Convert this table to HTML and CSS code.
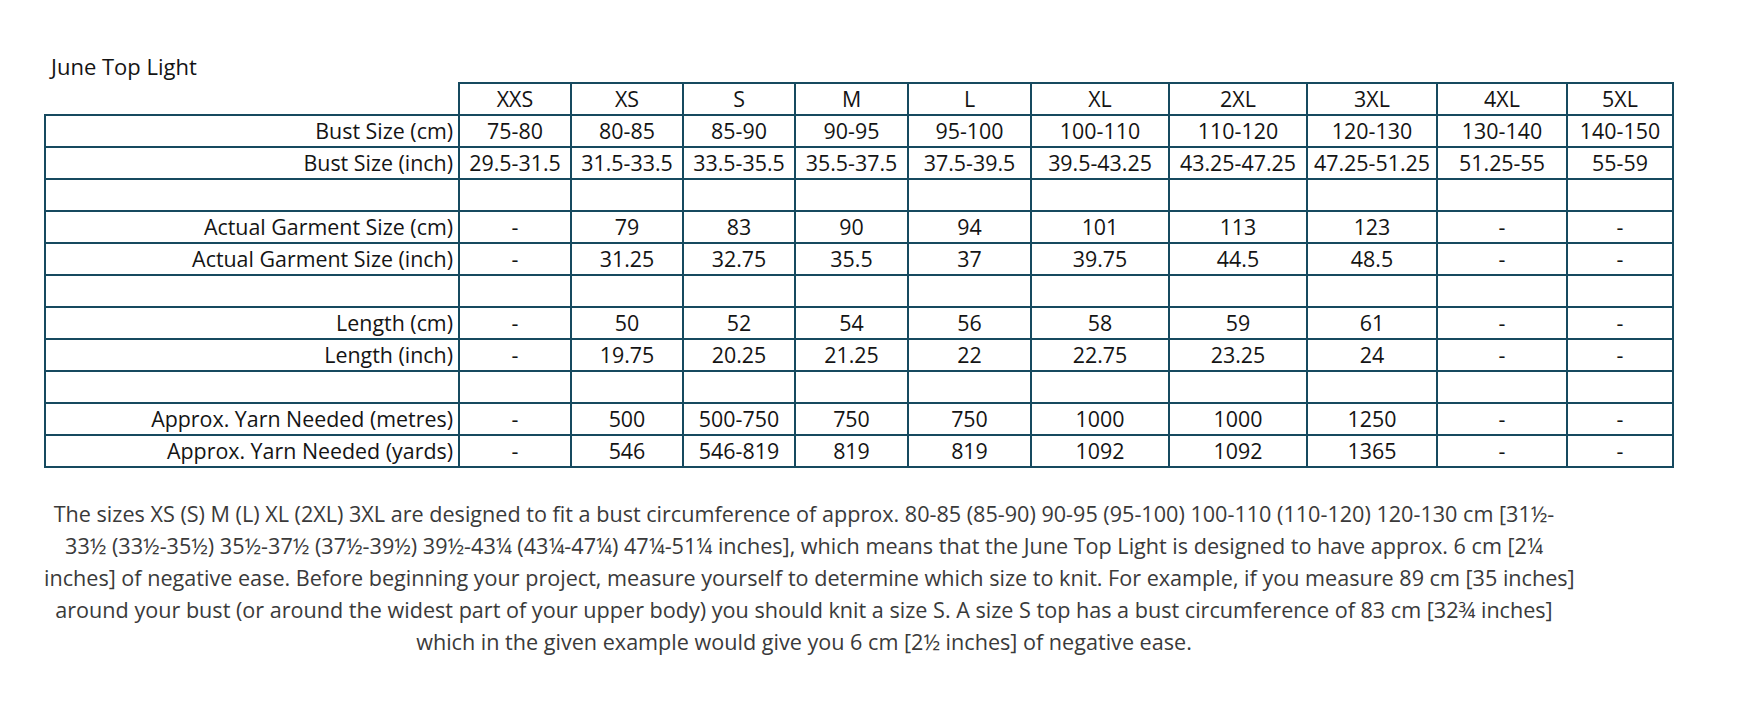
FILE: index.html
```html
<!DOCTYPE html>
<html lang="en">
<head>
<meta charset="utf-8">
<title>June Top Light – Size Chart</title>
<link rel="stylesheet" href="styles.css">
</head>
<body>
<main class="page">
  <h1 class="title">June Top Light</h1>
  <table class="chart">
    <colgroup>
      <col class="c-label"><col class="c-112"><col class="c-112"><col class="c-112"><col class="c-113"><col class="c-123"><col class="c-138"><col class="c-138"><col class="c-130"><col class="c-130"><col class="c-106">
    </colgroup>
    <thead>
      <tr>
        <th class="blank"></th>
        <th>XXS</th><th>XS</th><th>S</th><th>M</th><th>L</th><th>XL</th><th>2XL</th><th>3XL</th><th>4XL</th><th>5XL</th>
      </tr>
    </thead>
    <tbody>
      <tr><th class="label">Bust Size (cm)</th><td>75-80</td><td>80-85</td><td>85-90</td><td>90-95</td><td>95-100</td><td>100-110</td><td>110-120</td><td>120-130</td><td>130-140</td><td>140-150</td></tr>
      <tr><th class="label">Bust Size (inch)</th><td>29.5-31.5</td><td>31.5-33.5</td><td>33.5-35.5</td><td>35.5-37.5</td><td>37.5-39.5</td><td>39.5-43.25</td><td>43.25-47.25</td><td>47.25-51.25</td><td>51.25-55</td><td>55-59</td></tr>
      <tr class="spacer"><th class="label"></th><td></td><td></td><td></td><td></td><td></td><td></td><td></td><td></td><td></td><td></td></tr>
      <tr><th class="label">Actual Garment Size (cm)</th><td>-</td><td>79</td><td>83</td><td>90</td><td>94</td><td>101</td><td>113</td><td>123</td><td>-</td><td>-</td></tr>
      <tr><th class="label">Actual Garment Size (inch)</th><td>-</td><td>31.25</td><td>32.75</td><td>35.5</td><td>37</td><td>39.75</td><td>44.5</td><td>48.5</td><td>-</td><td>-</td></tr>
      <tr class="spacer"><th class="label"></th><td></td><td></td><td></td><td></td><td></td><td></td><td></td><td></td><td></td><td></td></tr>
      <tr><th class="label">Length (cm)</th><td>-</td><td>50</td><td>52</td><td>54</td><td>56</td><td>58</td><td>59</td><td>61</td><td>-</td><td>-</td></tr>
      <tr><th class="label">Length (inch)</th><td>-</td><td>19.75</td><td>20.25</td><td>21.25</td><td>22</td><td>22.75</td><td>23.25</td><td>24</td><td>-</td><td>-</td></tr>
      <tr class="spacer"><th class="label"></th><td></td><td></td><td></td><td></td><td></td><td></td><td></td><td></td><td></td><td></td></tr>
      <tr><th class="label">Approx. Yarn Needed (metres)</th><td>-</td><td>500</td><td>500-750</td><td>750</td><td>750</td><td>1000</td><td>1000</td><td>1250</td><td>-</td><td>-</td></tr>
      <tr><th class="label">Approx. Yarn Needed (yards)</th><td>-</td><td>546</td><td>546-819</td><td>819</td><td>819</td><td>1092</td><td>1092</td><td>1365</td><td>-</td><td>-</td></tr>
    </tbody>
  </table>
  <p class="note">The sizes XS (S) M (L) XL (2XL) 3XL are designed to fit a bust circumference of approx. 80-85 (85-90) 90-95 (95-100) 100-110 (110-120) 120-130 cm [31½-<br>33½ (33½-35½) 35½-37½ (37½-39½) 39½-43¼ (43¼-47¼) 47¼-51¼ inches], which means that the June Top Light is designed to have approx. 6 cm [2¼<br>inches] of negative ease. Before beginning your project, measure yourself to determine which size to knit. For example, if you measure 89 cm [35 inches]<br>around your bust (or around the widest part of your upper body) you should knit a size S. A size S top has a bust circumference of 83 cm [32¾ inches]<br>which in the given example would give you 6 cm [2½ inches] of negative ease.</p>
</main>
</body>
</html>
```
FILE: styles.css
```css
html, body {
  margin: 0;
  padding: 0;
  background: #ffffff;
}

body {
  font-family: "Open Sans", "Lato", "Liberation Sans", sans-serif;
  color: #141414;
}

.page {
  padding: 50px 0 0 44px;
}

.title {
  margin: 0 0 0 7px;
  font-size: 22px;
  font-weight: 400;
  line-height: 32px;
  color: #141414;
}

.chart {
  border-collapse: collapse;
  table-layout: fixed;
  width: 1630px;
  font-size: 21.4px;
}

.c-label { width: 414px; }
.c-112 { width: 112px; }
.c-113 { width: 113px; }
.c-123 { width: 123px; }
.c-138 { width: 138px; }
.c-130 { width: 130px; }
.c-106 { width: 106px; }

.chart th,
.chart td {
  border: 2px solid #164a5f;
  height: 30px;
  padding: 0 2px;
  font-weight: 400;
  text-align: center;
  vertical-align: middle;
  white-space: nowrap;
  line-height: 30px;
}

.chart th.blank {
  border: none;
}

.chart th.label {
  text-align: right;
  padding-right: 5px;
}

.note {
  margin: 30px 0 0 0;
  width: 1520px;
  text-align: center;
  font-size: 21.6px;
  line-height: 32px;
  color: #3a3a3a;
  white-space: nowrap;
}
```
